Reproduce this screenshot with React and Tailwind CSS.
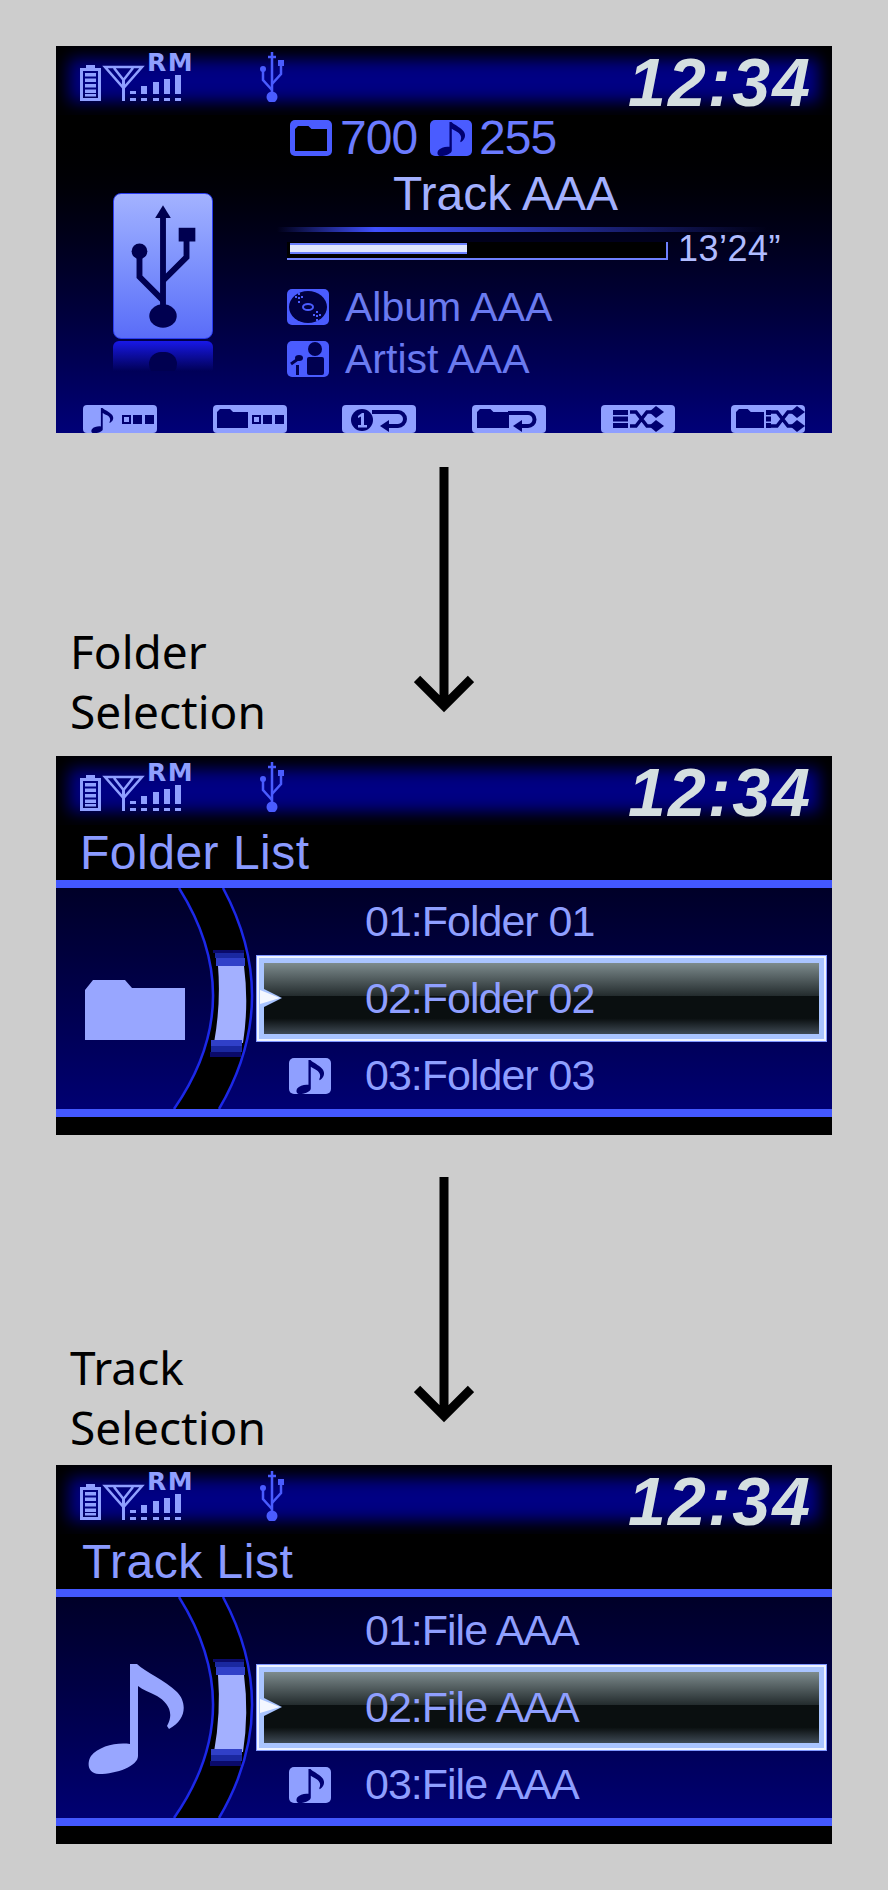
const DARK = "#000070";

function Note({ className, fill }) {
  return (
    <svg viewBox="0 0 98 110" className={className}>
      <path fill={fill} d="M43 0 L50 0 C58 8 78 16 90 28 C100 38 100 56 82 65 L80 62 C88 48 80 38 70 32 C62 28 56 26 51 22 L51 92 C51 102 30 110 12 110 C0 110 0 98 4 92 C12 82 30 78 43 80 Z" />
    </svg>
  );
}

function FolderShape({ fill, x = 0, y = 0, w = 32, h = 19 }) {
  const tab = w * 0.42;
  return (
    <path fill={fill} d={`M${x} ${y + h} V${y + 3} L${x + 3} ${y} H${x + tab} L${x + tab + 3} ${y + 3} H${x + w} V${y + h} Z`} />
  );
}

function StatusBar() {
  const bars = [
    [50, 16],
    [61, 11],
    [73, 7],
    [84, 4],
    [95, 0],
  ];
  return (
    <div className="h-[69px] bg-[#000084] shadow-[inset_0_0_16px_13px_#000] flex items-start justify-between pl-[24px] pr-[20px]">
      <div className="flex items-start gap-[62px] pt-[6px]">
        <svg width="116" height="50" viewBox="0 0 116 50" className="block">
          <g fill="#8f9fff">
            <rect x="6" y="13" width="9" height="4" />
            <path fillRule="evenodd" d="M0 16 H21 V49 H0 Z M3 19 V46 H18 V19 Z" />
            <rect x="5" y="21" width="11" height="3.5" />
            <rect x="5" y="26.5" width="11" height="3.5" />
            <rect x="5" y="32" width="11" height="3.5" />
            <rect x="5" y="37.5" width="11" height="3.5" />
            <rect x="5" y="42" width="11" height="2.5" />
            <rect x="42" y="26" width="3" height="23" />
            {bars.map(([x, top]) => (
              <g key={x}>
                <rect x={x} y={23 + top} width="6" height={19 - top} />
                <rect x={x} y="46" width="6" height="3" />
              </g>
            ))}
          </g>
          <path d="M25 15 H62 L43.5 36 Z M34 16 L43.5 28 L53 16" fill="none" stroke="#8f9fff" strokeWidth="2.5" />
          <text x="67" y="19" fontFamily="DejaVu Sans" fontWeight="700" fontSize="25" letterSpacing="1.5" fill="#8f9fff">RM</text>
        </svg>
        <svg width="28" height="50" viewBox="0 0 28 50" className="block">
          <g fill="none" stroke="#4a5cff" strokeWidth="2.5">
            <path d="M14 0 V44" />
            <path d="M10 5 H18" />
            <path d="M23 12 V22 L14 32" />
            <path d="M5 18 V28 L14 38" />
          </g>
          <g fill="#4a5cff">
            <rect x="20" y="8" width="6" height="6" />
            <circle cx="5" cy="17" r="3" />
            <circle cx="14" cy="45" r="5.5" />
          </g>
        </svg>
      </div>
      <span className="font-['Liberation_Sans',sans-serif] italic font-bold text-[68px] leading-none tracking-[2px] text-[#d5dfe0] mt-[2px]">12:34</span>
    </div>
  );
}

function CtrlButton({ children }) {
  return (
    <div className="w-[74px] h-[28px] rounded-[4px] bg-[#8f9fff]">
      <svg width="74" height="28" viewBox="0 0 74 28" className="block">
        {children}
      </svg>
    </div>
  );
}

function Squares() {
  return (
    <g>
      <rect x="40" y="11" width="7" height="7" fill="none" stroke={DARK} strokeWidth="2" />
      <rect x="50" y="10" width="9" height="9" fill={DARK} />
      <rect x="62" y="10" width="9" height="9" fill={DARK} />
    </g>
  );
}

function Loop({ from, head }) {
  return (
    <g>
      <path d={`M${from} 8 H56 A6.5 6.5 0 0 1 56 21 H${head + 6}`} fill="none" stroke={DARK} strokeWidth="4" />
      <polygon points={`${head},21 ${head + 9},15 ${head + 9},27`} fill={DARK} />
    </g>
  );
}

function Cross({ from }) {
  return (
    <g>
      <path d={`M${from} 7 H${from + 6} L${from + 17} 21 H${from + 26} M${from} 21 H${from + 6} L${from + 17} 7 H${from + 26}`} fill="none" stroke={DARK} strokeWidth="3.5" />
      <polygon points={`${from + 19},7 ${from + 26},1 ${from + 34},7 ${from + 26},13`} fill={DARK} />
      <polygon points={`${from + 19},21 ${from + 26},15 ${from + 34},21 ${from + 26},27`} fill={DARK} />
    </g>
  );
}

function ControlRow() {
  return (
    <div className="flex justify-between px-[27px] mt-[14px]">
      <CtrlButton>
        <g transform="translate(8 3) scale(0.23)">
          <path fill={DARK} d="M43 0 L50 0 C58 8 78 16 90 28 C100 38 100 56 82 65 L80 62 C88 48 80 38 70 32 C62 28 56 26 51 22 L51 92 C51 102 30 110 12 110 C0 110 0 98 4 92 C12 82 30 78 43 80 Z" />
        </g>
        <Squares />
      </CtrlButton>
      <CtrlButton>
        <FolderShape fill={DARK} x={4} y={4} w={31} h={19} />
        <Squares />
      </CtrlButton>
      <CtrlButton>
        <circle cx="20" cy="15" r="11" fill={DARK} />
        <path d="M16 11 L20 8 H22 V20 H25 V22.5 H16 V20 H19 V11.5 L16 13 Z" fill="#8f9fff" />
        <path d="M30 7 H56 A7 7 0 0 1 56 21 H46" fill="none" stroke={DARK} strokeWidth="4" />
        <polygon points="38,21 47,15 47,27" fill={DARK} />
      </CtrlButton>
      <CtrlButton>
        <FolderShape fill={DARK} x={5} y={4} w={32} h={19} />
        <Loop from={36} head={41} />
      </CtrlButton>
      <CtrlButton>
        <rect x="12" y="5" width="15" height="5" fill={DARK} />
        <rect x="12" y="11.5" width="15" height="5" fill={DARK} />
        <rect x="12" y="18" width="15" height="5" fill={DARK} />
        <Cross from={29} />
      </CtrlButton>
      <CtrlButton>
        <FolderShape fill={DARK} x={5} y={4} w={28} h={19} />
        <rect x="35" y="5" width="5" height="5" fill={DARK} />
        <rect x="35" y="11.5" width="5" height="5" fill={DARK} />
        <rect x="35" y="18" width="5" height="5" fill={DARK} />
        <Cross from={40} />
      </CtrlButton>
    </div>
  );
}

function BigUsb() {
  return (
    <div className="w-[100px] ml-[57px] mt-[78px]">
      <div className="h-[146px] rounded-[8px] border border-[#2a3cf0] bg-linear-to-b from-[#a3b2ff] to-[#5a6cf8]">
        <svg width="98" height="144" viewBox="0 0 100 146" className="block">
          <g fill="none" stroke="#000050" strokeWidth="6">
            <path d="M50 20 V120" />
            <path d="M74 44 V64 L50 88" />
            <path d="M26 60 V84 L50 108" />
          </g>
          <g fill="#000050">
            <polygon points="50,11 58,24 42,24" />
            <rect x="66" y="34" width="17" height="14" />
            <circle cx="26" cy="58" r="8" />
            <ellipse cx="50" cy="124" rx="14" ry="12" />
          </g>
        </svg>
      </div>
      <div className="relative mt-[2px] h-[30px] rounded-t-[6px] bg-linear-to-b from-[#1818e8] to-transparent overflow-hidden">
        <div className="w-[28px] h-[24px] rounded-full bg-[#000050] mx-auto mt-[11px]" />
      </div>
    </div>
  );
}

function BoxIcon({ bg = "bg-[#4a5cff]", children }) {
  return (
    <div className={`w-[42px] h-[36px] rounded-[5px] shrink-0 ${bg}`}>
      <svg width="42" height="36" viewBox="0 0 42 36" className="block">
        {children}
      </svg>
    </div>
  );
}

function NoteBox({ bg }) {
  return (
    <BoxIcon bg={bg}>
      <g transform="translate(7 2) scale(0.29 0.31)">
        <path fill={DARK} d="M43 0 L50 0 C58 8 78 16 90 28 C100 38 100 56 82 65 L80 62 C88 48 80 38 70 32 C62 28 56 26 51 22 L51 92 C51 102 30 110 12 110 C0 110 0 98 4 92 C12 82 30 78 43 80 Z" />
      </g>
    </BoxIcon>
  );
}

function NowPlaying() {
  return (
    <div className="h-[379px] flex flex-col">
      <StatusBar />
      <div className="flex-1 bg-linear-to-b from-black to-[#000078] flex flex-col">
        <div className="flex h-[276px]">
          <div className="w-[221px] shrink-0">
            <BigUsb />
          </div>
          <div className="flex-1 flex flex-col font-['Liberation_Sans',sans-serif]">
            <div className="flex items-center h-[36px] mt-[5px] ml-[13px] text-[#6b7bff] text-[48px] leading-none tracking-[-1px]">
              <BoxIcon>
                <FolderShape fill="#000" x={5} y={6} w={32} h={25} />
              </BoxIcon>
              <span className="ml-[8px] w-[90px]">700</span>
              <NoteBox />
              <span className="ml-[7px]">255</span>
            </div>
            <div className="h-[40px] mt-[18px] ml-[116px] text-[48px] leading-[40px] text-[#a3b0ff]">Track AAA</div>
            <div className="h-[5px] w-[491px] mt-[13px] bg-linear-to-r from-transparent via-[#4050ff] via-20% to-transparent" />
            <div className="flex items-end h-[26px] mt-[4px] ml-[10px]">
              <div className="w-[381px] h-[18px] mb-[2px] bg-black border-b-2 border-r-2 border-[#6f80ff]">
                <div className="w-[177px] h-[11px] ml-[3px] mt-[1px] bg-[#dfe6ff] border-y-2 border-[#6b80ff]" />
              </div>
              <span className="ml-[10px] text-[36px] leading-[26px] text-[#b0bcff] tracking-[0.5px]">13’24”</span>
            </div>
            <div className="flex items-center h-[36px] mt-[27px] ml-[10px]">
              <BoxIcon>
                <ellipse cx="21" cy="18" rx="19" ry="16" fill="#000040" />
                <ellipse cx="21" cy="18" rx="5" ry="3" fill="none" stroke="#4a5cff" strokeWidth="2" />
                <g fill="#4a5cff">
                  {[[12, 9], [30, 27]].map(([x, y]) => (
                    <g key={x}>
                      <rect x={x - 1} y={y - 5} width="2" height="2" />
                      <rect x={x - 4} y={y - 2} width="2" height="2" />
                      <rect x={x + 2} y={y - 2} width="2" height="2" />
                      <rect x={x - 1} y={y - 1} width="2" height="2" />
                      <rect x={x - 1} y={y + 3} width="2" height="2" />
                    </g>
                  ))}
                </g>
              </BoxIcon>
              <span className="ml-[16px] text-[41px] leading-none text-[#6a7af0]">Album AAA</span>
            </div>
            <div className="flex items-center h-[36px] mt-[16px] ml-[10px]">
              <BoxIcon>
                <g fill="#000050">
                  <circle cx="28" cy="8" r="7" />
                  <rect x="20" y="16" width="17" height="18" rx="2" />
                  <ellipse cx="12" cy="17" rx="4" ry="3" />
                  <rect x="9" y="24" width="3" height="10" />
                </g>
                <path d="M11 18 L4 23" stroke="#000050" strokeWidth="3" />
              </BoxIcon>
              <span className="ml-[16px] text-[41px] leading-none text-[#6a7af0]">Artist AAA</span>
            </div>
          </div>
        </div>
        <ControlRow />
      </div>
    </div>
  );
}

function Arcs() {
  return (
    <svg viewBox="0 0 200 221" className="absolute inset-0 w-full h-full">
      <path d="M123 0 Q193.5 112 118 221 H163 Q227 112 167 0 Z" fill="#000" />
      <path d="M123 0 Q193.5 112 118 221 M167 0 Q227 112 163 221" fill="none" stroke="#1c28e8" strokeWidth="2.5" />
      <path d="M162 78 H188 Q193 116 187 155 H158 Q165 116 162 78 Z" fill="#a3b0ff" />
      <rect x="157" y="62" width="31" height="3" fill="#0a0a6a" />
      <rect x="159" y="65" width="29" height="5" fill="#1a28a0" />
      <rect x="160" y="70" width="29" height="8" fill="#3040c8" />
      <rect x="155" y="152" width="31" height="6" fill="#3040c8" />
      <rect x="155" y="158" width="31" height="6" fill="#1a28a0" />
      <rect x="154" y="164" width="31" height="5" fill="#0a0a6a" />
    </svg>
  );
}

function ListPanel({ title, titlePad, icon, items }) {
  return (
    <div className="h-[379px] flex flex-col bg-black font-['Liberation_Sans',sans-serif]">
      <StatusBar />
      <div className={`h-[55px] flex items-center text-[48px] leading-none tracking-[0.5px] text-[#8a9aff] ${titlePad}`}>{title}</div>
      <div className="h-[8px] bg-[#4358ff]" />
      <div className="h-[221px] flex bg-linear-to-b from-[#000028] to-[#000072] text-[#8f9fff] text-[43px] leading-none tracking-[-1px]">
        <div className="relative w-[200px] shrink-0 flex items-center pt-[22px]">
          {icon}
          <Arcs />
        </div>
        <div className="flex-1 flex flex-col pr-[5px]">
          <div className="h-[67px] flex items-center pl-[109px]">{items[0]}</div>
          <div className="relative h-[87px] border border-[#7f96ff]">
            <div className="h-full border-[2px] border-[#eef3ff]">
              <div className="h-full flex items-center pl-[101px] border-[5px] border-[#a9c4ff] bg-[linear-gradient(to_bottom,#7d8b8d_0%,#222a2c_47%,#0a0f10_47%,#0a0f10_78%,#3f4a55_100%)]">
                {items[1]}
              </div>
            </div>
            <svg width="24" height="24" viewBox="0 0 24 24" className="absolute left-[3px] top-[31px]">
              <polygon points="0,0 22,11 0,22" fill="#a9c4ff" />
              <polygon points="0,3 20,11 0,17" fill="#f4f7ff" />
            </svg>
          </div>
          <div className="h-[67px] flex items-center pl-[33px]">
            <NoteBox bg="bg-[#8f9fff]" />
            <span className="ml-[34px]">{items[2]}</span>
          </div>
        </div>
      </div>
      <div className="h-[8px] bg-[#4358ff]" />
    </div>
  );
}

function Step({ height, lines, pad }) {
  return (
    <div className={`grid ${height}`}>
      <div className={`col-start-1 row-start-1 self-end pl-[14px] font-['Noto_Sans',sans-serif] text-[46px] leading-[60px] text-black ${pad}`}>
        {lines.map((l) => (
          <div key={l}>{l}</div>
        ))}
      </div>
      <svg width="60" height="246" viewBox="0 0 60 246" className="col-start-1 row-start-1 justify-self-center mt-[42px]">
        <path d="M30 0 V240 M3 212 L30 239 L57 212" fill="none" stroke="#000" strokeWidth="9" />
      </svg>
    </div>
  );
}

export default function App() {
  return (
    <div className="min-h-screen bg-[#cdcdcd] pt-[46px] pl-[56px] w-[888px]">
      <div className="w-[776px]">
        <NowPlaying />
        <Step height="h-[331px]" lines={["Folder", "Selection"]} pad="pb-[15px]" />
        <ListPanel
          title="Folder List"
          titlePad="pl-[24px]"
          icon={
            <svg width="100" height="60" viewBox="0 0 100 60" className="ml-[29px] block">
              <path fill="#98a6ff" d="M0 60 V10 L8 0 H40 L47 8 H100 V60 Z" />
            </svg>
          }
          items={["01:Folder 01", "02:Folder 02", "03:Folder 03"]}
        />
        <Step height="h-[330px]" lines={["Track", "Selection"]} pad="pb-[8px]" />
        <ListPanel
          title="Track List"
          titlePad="pl-[26px]"
          icon={<Note className="w-[98px] h-[110px] ml-[31px]" fill="#98a6ff" />}
          items={["01:File AAA", "02:File AAA", "03:File AAA"]}
        />
      </div>
    </div>
  );
}
